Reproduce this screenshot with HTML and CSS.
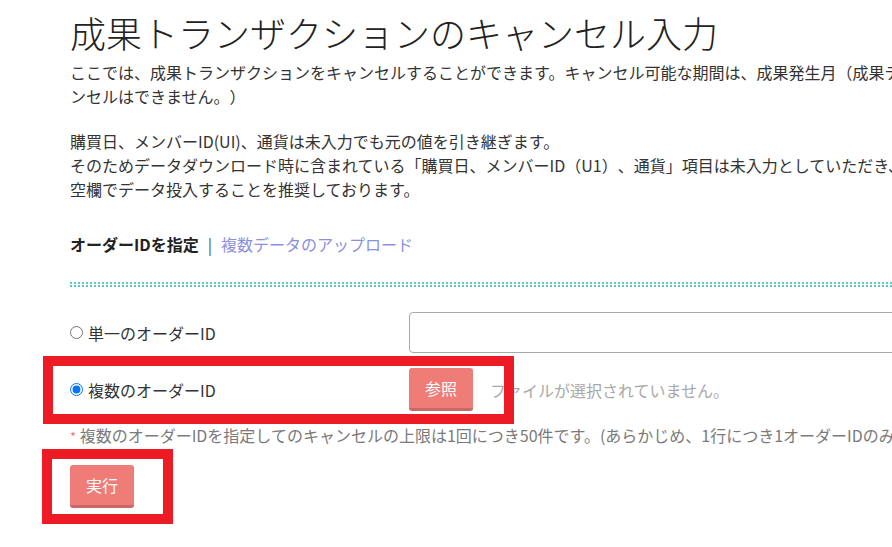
FILE: index.html
```html
<!DOCTYPE html>
<html lang="ja">
<head>
<meta charset="utf-8">
<title>成果トランザクションのキャンセル入力</title>
<link rel="stylesheet" href="styles.css">
</head>
<body>
<div class="page">
  <h1 class="title">成果トランザクションのキャンセル入力</h1>
  <p class="lead">ここでは、成果トランザクションをキャンセルすることができます。キャンセル可能な期間は、成果発生月（成果テーブル記載日）の翌月末まで。キャンセルはできません。）</p>
  <p class="lead lead-gap">購買日、メンバーID(UI)、通貨は未入力でも元の値を引き継ぎます。<br>そのためデータダウンロード時に含まれている「購買日、メンバーID（U1）、通貨」項目は未入力としていただき、<br>空欄でデータ投入することを推奨しております。</p>

  <div class="tabs">
    <span class="tab-active">オーダーIDを指定</span>
    <span class="tab-sep">|</span>
    <a class="tab-link" href="#">複数データのアップロード</a>
  </div>
  <div class="dots"></div>

  <form class="form">
    <div class="row row-single">
      <label class="choice"><input type="radio" name="mode"><span>単一のオーダーID</span></label>
      <input class="text-input" type="text">
    </div>
    <div class="row row-multi">
      <label class="choice"><input type="radio" name="mode" checked><span>複数のオーダーID</span></label>
      <div class="file">
        <button type="button" class="btn">参照</button>
        <span class="file-name">ファイルが選択されていません。</span>
      </div>
    </div>
    <p class="note"><span class="req">*</span> 複数のオーダーIDを指定してのキャンセルの上限は1回につき50件です。(あらかじめ、1行につき1オーダーIDのみ記載したファイルをご用意ください。)</p>
    <div class="actions">
      <button type="button" class="btn">実行</button>
    </div>
  </form>

  <div class="mark mark-row"></div>
  <div class="mark mark-btn"></div>
</div>
</body>
</html>
```
FILE: styles.css
```css
html {
  overflow: hidden;
  background: #fff;
}
body {
  margin: 0;
  padding: 0;
  font-family: "Noto Sans CJK JP", "Noto Sans", sans-serif;
  color: #333;
  text-spacing-trim: space-all;
}
.page {
  position: relative;
  width: 1090px;
  min-height: 547px;
  padding: 11px 0 0 70px;
}
.title {
  margin: 0;
  font-size: 36px;
  line-height: 43px;
  font-weight: 300;
  color: #222;
}
.lead {
  margin: 6px 0 0;
  font-size: 16px;
  line-height: 24px;
}
.lead-gap {
  margin-top: 21px;
  white-space: nowrap;
}
.tabs {
  margin-top: 31px;
  font-size: 16px;
  line-height: 24px;
  display: flex;
  align-items: center;
}
.tab-active {
  font-weight: 700;
  color: #222;
}
.tab-sep {
  color: #4b5570;
  margin: 0 9px 0 9px;
}
.tab-link {
  color: #8a8fe2;
  text-decoration: none;
}
.dots {
  margin-top: 26px;
  height: 5px;
  background:
    linear-gradient(90deg, #5ec6c3 50%, transparent 50%) 0 0 / 4px 2px repeat-x,
    linear-gradient(90deg, #5ec6c3 50%, transparent 50%) 0 3px / 4px 2px repeat-x;
}
.form {
  margin: 25px 0 0;
}
.row {
  display: flex;
  align-items: center;
}
.row-multi {
  margin-top: 15px;
}
.choice {
  width: 339px;
  flex: none;
  display: flex;
  align-items: center;
  font-size: 16px;
  color: #333;
}
.choice input {
  width: 13px;
  height: 13px;
  margin: 0 5px 0 0;
}
.text-input {
  width: 600px;
  height: 41px;
  box-sizing: border-box;
  border: 1px solid #aaa;
  border-radius: 4px;
  padding: 0 10px;
  font: inherit;
}
.file {
  display: flex;
  align-items: center;
  gap: 17px;
}
.btn {
  font-family: inherit;
  font-size: 16px;
  color: #fff;
  background: #ef7c77;
  border: none;
  border-bottom: 3px solid #c96965;
  border-radius: 3px;
  height: 43px;
  width: 64px;
  padding: 0;
  box-sizing: border-box;
  cursor: pointer;
}
.file-name {
  font-size: 16px;
  color: #a8a8a8;
}
.note {
  margin: 12px 0 0;
  font-size: 16px;
  line-height: 24px;
  color: #7a7a7a;
  white-space: nowrap;
}
.req {
  color: #f07a7a;
  font-size: 13px;
}
.actions {
  margin-top: 16px;
}
.mark {
  position: absolute;
  border: 10px solid #ed1c24;
  box-sizing: border-box;
}
.mark-row {
  left: 43px;
  top: 356px;
  width: 471px;
  height: 68px;
}
.mark-btn {
  left: 42px;
  top: 449px;
  width: 131px;
  height: 75px;
}
```
